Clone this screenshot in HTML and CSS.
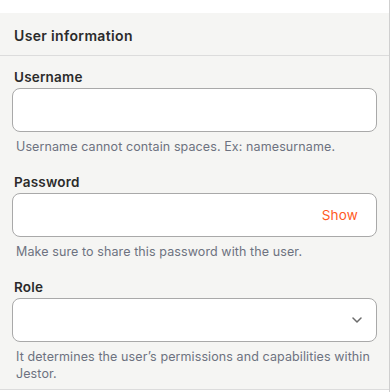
FILE: index.html
```html
<!DOCTYPE html>
<html lang="en">
<head>
  <meta charset="UTF-8" />
  <meta name="viewport" content="width=device-width, initial-scale=1.0" />
  <title>User information</title>
  <link rel="stylesheet" href="styles.css">
</head>
<body>
  <div class="page">
    <div class="panel">
      <div class="panel-header">User information</div>

      <div class="panel-body">
        <div class="field">
          <label class="field-label" for="username">Username</label>
          <div class="input-box">
            <input id="username" type="text" />
          </div>
          <div class="field-help">Username cannot contain spaces. Ex: namesurname.</div>
        </div>

        <div class="field">
          <label class="field-label" for="password">Password</label>
          <div class="input-box">
            <input id="password" type="password" />
            <span class="show-toggle">Show</span>
          </div>
          <div class="field-help">Make sure to share this password with the user.</div>
        </div>

        <div class="field">
          <label class="field-label" for="role">Role</label>
          <div class="input-box">
            <div id="role" class="select-value"></div>
            <svg class="chevron" width="10" height="6" viewBox="0 0 10 6">
              <path d="M1 1 L5 5 L9 1" fill="none" stroke="#6b6b6b" stroke-width="1.5" stroke-linecap="round" stroke-linejoin="round"/>
            </svg>
          </div>
          <div class="field-help">It determines the user’s permissions and capabilities within Jestor.</div>
        </div>
      </div>
    </div>
  </div>
</body>
</html>
```

FILE: styles.css
```css
* {
  box-sizing: border-box;
  margin: 0;
  padding: 0;
  font-family: 'Inter', 'Noto Sans', sans-serif;
}

html, body {
  background: #ffffff;
}

.page {
  width: 390px;
  min-height: 100vh;
  padding-top: 13px;
  border-right: 1px solid #cfcfcf;
}

.panel {
  background: #f5f5f3;
  border-bottom: 1px solid #dcdcdc;
}

.panel-header {
  height: 43px;
  padding: 3px 14px 0;
  display: flex;
  align-items: center;
  font-size: 14px;
  font-weight: 600;
  letter-spacing: 0.35px;
  color: #2b2b2b;
  border-bottom: 1px solid #dcdcdc;
}

.panel-body {
  padding: 12px 12px 7px;
  display: flex;
  flex-direction: column;
  gap: 18px;
}

.field {
  display: flex;
  flex-direction: column;
}

.field-label {
  font-size: 13.5px;
  font-weight: 600;
  letter-spacing: 0.2px;
  color: #2b2b2b;
  line-height: 17px;
  padding: 1px 0 0 2px;
  margin-bottom: 2px;
}

.input-box {
  height: 44px;
  background: #ffffff;
  border: 1px solid #a9a9a9;
  border-radius: 8px;
  display: flex;
  align-items: center;
  padding: 0 14px 0 12px;
}

.input-box input,
.select-value {
  flex: 1;
  border: none;
  outline: none;
  background: transparent;
  font-size: 13px;
  height: 100%;
}

.show-toggle {
  color: #ff5a1f;
  font-size: 13.5px;
  letter-spacing: 0.2px;
  cursor: pointer;
  padding-right: 4px;
}

.field-help {
  margin-top: 6px;
  padding-left: 4px;
  font-size: 12.5px;
  line-height: 17px;
  color: #6d7280;
  letter-spacing: 0.1px;
}
```
